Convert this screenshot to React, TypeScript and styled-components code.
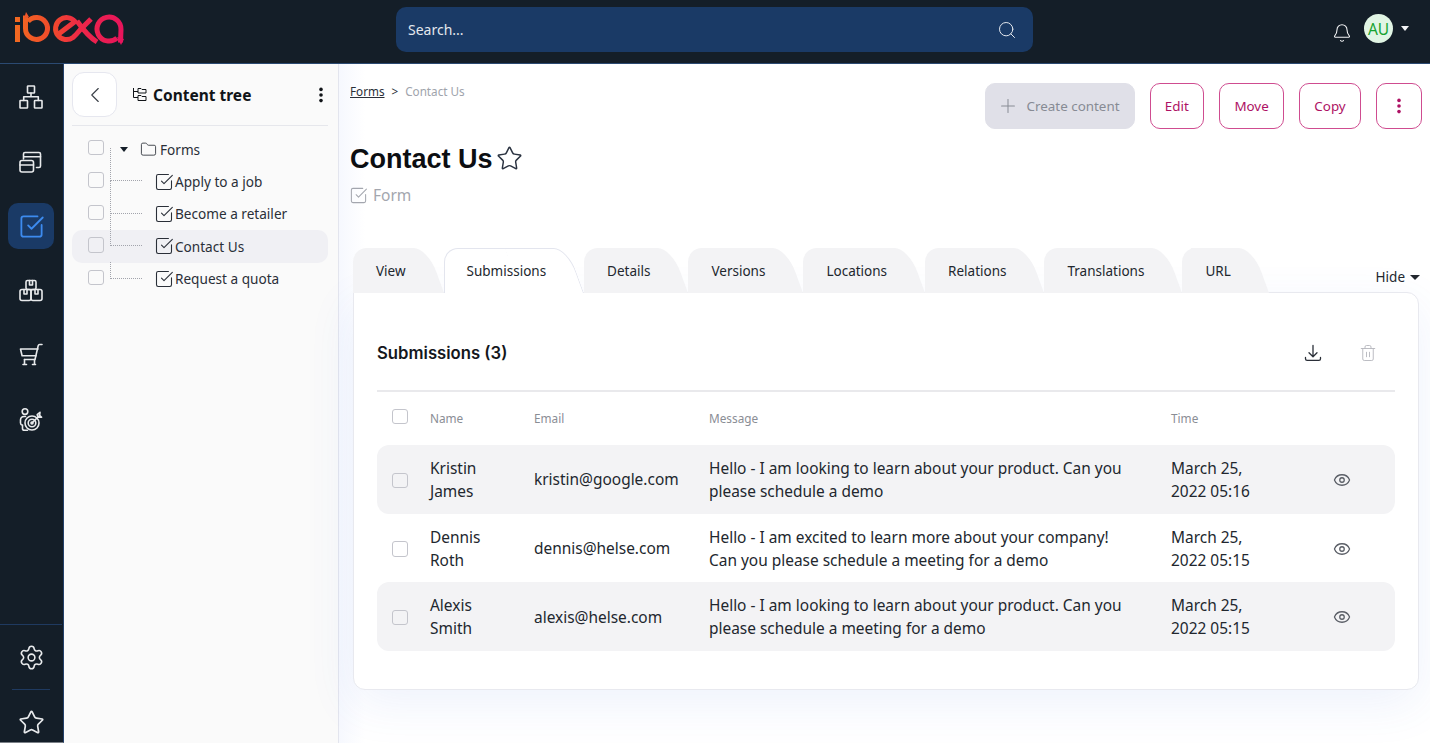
import React from "react";
import styled, { createGlobalStyle } from "styled-components";
import {
  Bell,
  ChevronLeft,
  Eye,
  Folder,
  Plus,
  Search,
  Settings,
  SquareCheckBig,
  Star,
  Trash2,
} from "lucide-react";

const GlobalStyle = createGlobalStyle`
  html, body {
    margin: 0;
    padding: 0;
    background: #fff;
    overflow: hidden;
  }
  * {
    box-sizing: border-box;
  }
  body {
    font-family: "Noto Sans", "Open Sans", sans-serif;
    color: #22272e;
  }
`;

const Page = styled.div`
  width: 1430px;
  height: 743px;
  display: flex;
  flex-direction: column;
  overflow: hidden;
`;

const TopBar = styled.header`
  height: 64px;
  flex: none;
  display: flex;
  align-items: flex-start;
  background: #141e28;
  border-bottom: 1px solid #2b4a72;
`;

const LogoBox = styled.div`
  width: 396px;
  flex: none;
  height: 63px;
`;

const SearchBox = styled.div`
  width: 637px;
  height: 45px;
  margin-top: 7px;
  padding: 0 16px 0 12px;
  display: flex;
  align-items: center;
  justify-content: space-between;
  background: #1a3a66;
  border-radius: 10px;
  color: #e4e8ee;
  font-size: 14px;
`;

const UserArea = styled.div`
  flex: 1;
  height: 63px;
  display: flex;
  align-items: center;
  justify-content: flex-end;
  padding: 0 21px 6px 0;
  color: #f2f3f5;
`;

const BellWrap = styled.span`
  display: flex;
  margin: 9px 12px 0 0;
`;

const Avatar = styled.div`
  width: 29px;
  height: 29px;
  border-radius: 50%;
  margin-right: 8px;
  background: #e1f5e4;
  color: #16a32f;
  font-size: 15.5px;
  display: flex;
  align-items: center;
  justify-content: center;
`;

const Caret = styled.span<{ $color?: string }>`
  display: inline-block;
  width: 0;
  height: 0;
  border-left: 4.5px solid transparent;
  border-right: 4.5px solid transparent;
  border-top: 5px solid ${(p) => p.$color || "#141e28"};
`;

const Body = styled.div`
  flex: 1;
  min-height: 0;
  display: flex;
`;

const SideNav = styled.nav`
  width: 64px;
  flex: none;
  display: flex;
  flex-direction: column;
  background: #141e28;
  border-right: 1px solid #23406a;
  border-bottom: 1px solid #7b8087;
  padding: 0 1px 0 0;
`;

const NavList = styled.div`
  flex: 1;
  padding-top: 10px;
  display: flex;
  flex-direction: column;
  align-items: center;
  gap: 18.6px;
`;

const NavItem = styled.div<{ $active?: boolean }>`
  width: 46px;
  height: 46px;
  flex: none;
  border-radius: 10px;
  display: flex;
  align-items: center;
  justify-content: center;
  color: ${(p) => (p.$active ? "#3d8bef" : "#e8eaec")};
  background: ${(p) => (p.$active ? "#1a3a66" : "transparent")};
`;

const NavBottom = styled.div`
  border-top: 1px solid #1f3a60;
  height: 118px;
  flex: none;
  display: flex;
  flex-direction: column;
  align-items: center;
  padding-top: 9.5px;
`;

const NavRule = styled.div`
  width: 38px;
  height: 1px;
  flex: none;
  background: #1f3a60;
  margin: 8.5px 0 9px;
`;

const TreePanel = styled.aside`
  width: 275px;
  flex: none;
  padding: 8px 10px 0 8px;
  background: #fafafa;
  border-right: 1px solid #e3e5ee;
`;

const TreeHead = styled.div`
  height: 54px;
  display: flex;
  align-items: flex-start;
  border-bottom: 1px solid #e6e7ec;
`;

const BackButton = styled.div`
  width: 45px;
  height: 45px;
  background: #fff;
  border: 1px solid #e6e7ef;
  border-radius: 12px;
  display: flex;
  align-items: center;
  justify-content: center;
  color: #3a3f47;
`;

const TreeTitle = styled.div`
  flex: 1;
  height: 45px;
  display: flex;
  align-items: center;
  gap: 6px;
  margin-left: 15px;
  font-size: 15.5px;
  font-weight: 700;
  color: #111418;
`;

const Kebab = styled.svg`
  display: block;
`;

const TreeKebab = styled.div`
  height: 45px;
  width: 9px;
  display: flex;
  align-items: center;
`;

const TreeList = styled.div`
  padding-top: 7px;
`;

const TreeRow = styled.div<{ $selected?: boolean }>`
  position: relative;
  height: 32.4px;
  padding-left: 16px;
  display: flex;
  align-items: center;
  border-radius: 10px;
  background: ${(p) => (p.$selected ? "#f0f0f4" : "transparent")};
  font-size: 13.6px;
  color: #2a2f38;
`;

const Connector = styled.span<{ $last?: boolean }>`
  position: absolute;
  left: 38px;
  top: ${(p) => (p.$last ? "-1px" : "-17px")};
  width: 32px;
  height: ${(p) => (p.$last ? "17px" : "33px")};
  border-left: 1px dotted #a2a4ac;

  &::after {
    content: "";
    position: absolute;
    left: 0;
    right: 0;
    bottom: 0;
    border-bottom: 1px dotted #a2a4ac;
  }
`;

const Check = styled.span<{ $lift?: number }>`
  display: block;
  flex: none;
  width: 15.5px;
  height: 15.5px;
  margin-top: ${(p) => -(p.$lift ?? 3)}px;
  border: 1.5px solid #c4c5cc;
  border-radius: 3px;
`;

const TreeCaret = styled(Caret)`
  margin: 0 12px 0 16.5px;
`;

const NodeIcon = styled.span<{ $leaf?: boolean }>`
  display: flex;
  margin: ${(p) => (p.$leaf ? "0 1px 0 -2px" : "0 3px 0 0")};
  color: #2a2f38;
`;

const ChildIndent = styled.span`
  width: 52.5px;
  flex: none;
`;

const Main = styled.main`
  flex: 1;
  min-width: 0;
  padding: 19px 8px 0 11px;
  background: linear-gradient(90deg, #f6f8fe 0, #fff 26px);
`;

const TopRow = styled.div`
  height: 46px;
  display: flex;
  justify-content: space-between;
`;

const Crumbs = styled.div`
  display: flex;
  gap: 7px;
  font-size: 11.7px;
  line-height: 17px;
  color: #a0a4ac;
`;

const CrumbLink = styled.span`
  color: #2a2f38;
  text-decoration: underline;
`;

const CrumbSep = styled.span`
  color: #2a2f38;
`;

const Actions = styled.div`
  display: flex;
  gap: 15px;
`;

const ActionButton = styled.div<{ $disabled?: boolean; $square?: boolean }>`
  height: 46px;
  display: flex;
  align-items: center;
  justify-content: center;
  gap: 8px;
  padding: ${(p) => (p.$square ? "0" : p.$disabled ? "0 14px 0 11px" : "0 14.3px")};
  width: ${(p) => (p.$square ? "46px" : "auto")};
  border-radius: 10px;
  font-size: 13.4px;
  background: ${(p) => (p.$disabled ? "#e0e0e8" : "#fff")};
  color: ${(p) => (p.$disabled ? "#878b94" : "#ae1164")};
  border: 1px solid ${(p) => (p.$disabled ? "#e0e0e8" : "#cf4c90")};
`;

const TitleRow = styled.div`
  display: flex;
  align-items: center;
  gap: 3px;
  margin-top: 13px;
  height: 34px;
`;

const Title = styled.h1`
  margin: 0;
  font-family: "Liberation Sans", Arial, sans-serif;
  font-size: 27px;
  font-weight: 700;
  color: #0c0e12;
`;

const TitleStar = styled.span`
  display: flex;
  margin-top: -2px;
  color: #2a3240;
`;

const TypeRow = styled.div`
  display: flex;
  align-items: center;
  gap: 5px;
  height: 22px;
  margin: 8px 0 0 -1px;
  font-size: 15.5px;
  color: #a3a6ae;
`;

const TabBar = styled.div`
  position: relative;
  z-index: 1;
  height: 45px;
  margin: 42px 2px -1px 3px;
  display: flex;
  justify-content: space-between;
`;

const Tabs = styled.div`
  display: flex;
`;

const Tab = styled.div<{ $active?: boolean }>`
  position: relative;
  height: 45px;
  padding: 0 38px 0 23px;
  display: flex;
  align-items: center;
  font-size: 13.5px;
  color: #22272e;
  z-index: ${(p) => (p.$active ? 2 : 1)};

  &::before {
    content: "";
    position: absolute;
    left: 0;
    top: 0;
    bottom: 0;
    right: 40px;
    background: ${(p) => (p.$active ? "#fff" : "#f3f3f5")};
    border-top-left-radius: 14px;
    border: ${(p) => (p.$active ? "1px solid #e3e5ee" : "none")};
    border-right: none;
    border-bottom: none;
  }

  &::after {
    content: "";
    position: absolute;
    right: 0;
    top: 0;
    bottom: 0;
    width: 62px;
    background: ${(p) => (p.$active ? "#fff" : "#f3f3f5")};
    border-top-right-radius: 14px 24px;
    border: ${(p) => (p.$active ? "1px solid #e3e5ee" : "none")};
    border-left: none;
    border-bottom: none;
    transform: skewX(20deg);
    transform-origin: bottom right;
  }
`;

const TabLabel = styled.span`
  position: relative;
  z-index: 1;
  margin-top: 1px;
`;

const HideToggle = styled.div`
  display: flex;
  align-items: center;
  gap: 5px;
  height: 18px;
  margin-top: 20px;
  font-size: 13.5px;
  color: #22272e;
`;

const HideCaret = styled(Caret)`
  border-left-width: 5px;
  border-right-width: 5px;
  border-top-width: 5.5px;
`;

const Card = styled.section`
  position: relative;
  height: 398px;
  margin: 0 3px 0 3px;
  padding: 0 23px;
  background: #fff;
  border: 1px solid #e8e9ef;
  border-radius: 0 12px 12px 12px;
  box-shadow: 0 14px 48px rgba(70, 110, 220, 0.09);
`;

const CardHead = styled.div`
  height: 99px;
  padding-top: 23px;
  display: flex;
  align-items: center;
  justify-content: space-between;
  border-bottom: 2px solid #e9e9ec;
`;

const CardTitle = styled.h2`
  margin: 0;
  font-family: Inter, sans-serif;
  font-size: 16.7px;
  font-weight: 600;
  color: #14171c;
`;

const CardTools = styled.div`
  display: flex;
  align-items: center;
  gap: 37px;
  padding-right: 18px;
  color: #2a2f38;
`;

const MutedIcon = styled.span`
  display: flex;
  color: #b4b6bc;
`;

const grid = `
  display: grid;
  grid-template-columns: 53px 104px 175px 462px 118px 1fr;
  align-items: center;
`;

const HeadRow = styled.div`
  ${grid}
  height: 53px;
  padding-bottom: 1px;
  font-size: 11.8px;
  color: #8a8d95;
`;

const CheckCell = styled.div`
  padding-left: 15px;
`;

const DataRow = styled.div<{ $shaded?: boolean }>`
  ${grid}
  height: 68.7px;
  padding-top: 1px;
  font-size: 15.45px;
  line-height: 23px;
  color: #22272e;
  border-radius: 12px;
  background: ${(p) => (p.$shaded ? "#f3f3f5" : "transparent")};
`;

const EyeCell = styled.div`
  display: flex;
  justify-content: center;
  color: #5a5e66;
`;

const Dots = ({ color, size = 4 }: { color: string; size?: number }) => (
  <Kebab width={size} height={size * 4} viewBox="0 0 4 16" fill={color}>
    <circle cx="2" cy="2.4" r="1.8" />
    <circle cx="2" cy="8" r="1.8" />
    <circle cx="2" cy="13.6" r="1.8" />
  </Kebab>
);

const Logo = () => (
  <svg width="140" height="60" viewBox="0 0 140 60" fill="none" style={{ display: "block" }}>
    <defs>
      <linearGradient id="logoGrad" x1="15" y1="0" x2="124" y2="0" gradientUnits="userSpaceOnUse">
        <stop offset="0" stopColor="#f26a21" />
        <stop offset="0.35" stopColor="#f0492c" />
        <stop offset="0.6" stopColor="#ee2748" />
        <stop offset="1" stopColor="#e8145c" />
      </linearGradient>
    </defs>
    <g stroke="url(#logoGrad)" strokeWidth="5">
      <path d="M17.5 17v5M17.5 25v17" />
      <path d="M28 21.5a11 11 0 1 1-2.5 7V15.5" />
      <path d="M56 36L75 21.5a11 11 0 1 0-2 16c3-2.5 5-5 7-7.5L91 19" />
      <path d="M77 21c3.5 5 12 16 20 21" />
      <path d="M120.5 42.5l.5-13a12 12 0 1 0-4 8.5" />
    </g>
    <path d="M26 12l3 5-5 2z" fill="#f0562a" />
    <path d="M117 37l7 2-3 6z" fill="#e8145c" />
  </svg>
);

const iconProps = {
  width: 24,
  height: 24,
  viewBox: "0 0 24 24",
  fill: "none",
  stroke: "currentColor",
  strokeWidth: 1.6,
  strokeLinejoin: "round" as const,
  strokeLinecap: "round" as const,
};

const SiteIcon = () => (
  <svg {...iconProps}>
    <rect x="8.5" y="1" width="7" height="7" rx="0.6" />
    <rect x="1" y="15.5" width="7.5" height="7.5" rx="0.6" />
    <rect x="15.5" y="15.5" width="7.5" height="7.5" rx="0.6" />
    <path d="M12 8v3.7M4.7 15.5v-3.8h14.6v3.8" />
  </svg>
);

const ContentIcon = () => (
  <svg {...iconProps}>
    <path d="M4.5 9V4A1.5 1.5 0 0 1 6 2.5h14A1.5 1.5 0 0 1 21.5 4v12a1.5 1.5 0 0 1-1.5 1.5h-2.5" />
    <path d="M5 6.8h16.5" />
    <rect x="1" y="10.5" width="13.5" height="11.5" rx="2" />
    <path d="M1 15h13.5" />
  </svg>
);

const BoxesIcon = () => (
  <svg {...iconProps}>
    <rect x="7" y="1.5" width="10" height="9" rx="1.4" />
    <rect x="1" y="10.5" width="11" height="11" rx="2" />
    <rect x="12" y="10.5" width="11" height="11" rx="2" />
    <path d="M10.5 1.5V6h3V1.5M5 10.5V15h3v-4.5M16 10.5V15h3v-4.5" />
  </svg>
);

const CartIcon = () => (
  <svg {...iconProps}>
    <path d="M23 1.5h-2.4c-.7 0-1.2.4-1.4 1.1L16 16.5H5.5" />
    <path d="M19 6H1.5l1.6 6.8h14" />
    <path d="M5.5 16.5v4.5M7.5 21.5H4M15.5 16.5v4.5M16.5 21.5h-3" />
  </svg>
);

const TargetIcon = () => (
  <svg {...iconProps}>
    <circle cx="6" cy="3.6" r="2.8" />
    <path d="M6.5 8.5H5A3.6 3.6 0 0 0 1.5 12v3c0 1.2.8 2 2 2.2M3.5 17v3.5c0 1 .8 1.8 2 1.8h3" />
    <circle cx="13" cy="15" r="7" />
    <circle cx="13" cy="15" r="3.8" />
    <circle cx="13" cy="15" r="1" />
    <path d="M13 15l7-7M19 9l3.6.3-2-2 .4-3-2.8 2.4z" />
  </svg>
);

const TreeIcon = () => (
  <svg width="15" height="15" viewBox="0 0 15 15" fill="none" stroke="currentColor" strokeWidth="1" strokeLinejoin="round">
    <path d="M1.5 1v9.5H6M1.5 4.5H6" />
    <path d="M6 1.5h3l1 1h4v3.5H6zM6 8.5h3l1 1h4V13.5H6z" />
  </svg>
);

const DownloadIcon = () => (
  <svg width="18" height="18" viewBox="0 0 18 18" fill="none" stroke="currentColor" strokeWidth="1.3" strokeLinecap="round" strokeLinejoin="round">
    <path d="M9 1.5v11M5 8.8l4 4 4-4" />
    <path d="M1.5 13.5v1.2c0 .9.7 1.6 1.6 1.6h11.8c.9 0 1.6-.7 1.6-1.6v-1.2" />
  </svg>
);

const ROWS = [
  {
    first: "Kristin",
    last: "James",
    email: "kristin@google.com",
    l1: "Hello - I am looking to learn about your product. Can you",
    l2: "please schedule a demo",
    time: "05:16",
    shaded: true,
  },
  {
    first: "Dennis",
    last: "Roth",
    email: "dennis@helse.com",
    l1: "Hello - I am excited to learn more about your company!",
    l2: "Can you please schedule a meeting for a demo",
    time: "05:15",
    shaded: false,
  },
  {
    first: "Alexis",
    last: "Smith",
    email: "alexis@helse.com",
    l1: "Hello - I am looking to learn about your product. Can you",
    l2: "please schedule a meeting for a demo",
    time: "05:15",
    shaded: true,
  },
];

const TABS = ["View", "Submissions", "Details", "Versions", "Locations", "Relations", "Translations", "URL"];

const TREE = ["Apply to a job", "Become a retailer", "Contact Us", "Request a quota"];

const App = () => {
  return (
    <Page>
      <GlobalStyle />
      <TopBar>
        <LogoBox>
          <Logo />
        </LogoBox>
        <SearchBox>
          <span>Search...</span>
          <Search size={20} strokeWidth={1.2} />
        </SearchBox>
        <UserArea>
          <BellWrap>
            <Bell size={20} strokeWidth={1.3} />
          </BellWrap>
          <Avatar>AU</Avatar>
          <Caret $color="#f2f3f5" />
        </UserArea>
      </TopBar>
      <Body>
        <SideNav>
          <NavList>
            <NavItem>
              <SiteIcon />
            </NavItem>
            <NavItem>
              <ContentIcon />
            </NavItem>
            <NavItem $active>
              <SquareCheckBig size={27} strokeWidth={1.6} />
            </NavItem>
            <NavItem>
              <BoxesIcon />
            </NavItem>
            <NavItem>
              <CartIcon />
            </NavItem>
            <NavItem>
              <TargetIcon />
            </NavItem>
          </NavList>
          <NavBottom>
            <NavItem>
              <Settings size={27} strokeWidth={1.4} />
            </NavItem>
            <NavRule />
            <NavItem>
              <Star size={27} strokeWidth={1.5} />
            </NavItem>
          </NavBottom>
        </SideNav>
        <TreePanel>
          <TreeHead>
            <BackButton>
              <ChevronLeft size={26} strokeWidth={1} />
            </BackButton>
            <TreeTitle>
              <TreeIcon />
              Content tree
            </TreeTitle>
            <TreeKebab>
              <Dots color="#111418" />
            </TreeKebab>
          </TreeHead>
          <TreeList>
            <TreeRow>
              <Check />
              <TreeCaret />
              <NodeIcon>
                <Folder size={17} strokeWidth={1.2} />
              </NodeIcon>
              Forms
            </TreeRow>
            {TREE.map((name, i) => (
              <TreeRow key={name} $selected={name === "Contact Us"}>
                <Connector $last={i === TREE.length - 1} />
                <Check />
                <ChildIndent />
                <NodeIcon $leaf>
                  <SquareCheckBig size={20} strokeWidth={1.3} />
                </NodeIcon>
                {name}
              </TreeRow>
            ))}
          </TreeList>
        </TreePanel>
        <Main>
          <TopRow>
            <Crumbs>
              <CrumbLink>Forms</CrumbLink>
              <CrumbSep>&gt;</CrumbSep>
              <span>Contact Us</span>
            </Crumbs>
            <Actions>
              <ActionButton $disabled>
                <Plus size={22} strokeWidth={1.1} />
                Create content
              </ActionButton>
              <ActionButton>Edit</ActionButton>
              <ActionButton>Move</ActionButton>
              <ActionButton>Copy</ActionButton>
              <ActionButton $square>
                <Dots color="#ae1164" />
              </ActionButton>
            </Actions>
          </TopRow>
          <TitleRow>
            <Title>Contact Us</Title>
            <TitleStar>
              <Star size={27} strokeWidth={1.3} />
            </TitleStar>
          </TitleRow>
          <TypeRow>
            <SquareCheckBig size={19} strokeWidth={1.3} />
            Form
          </TypeRow>
          <TabBar>
            <Tabs>
              {TABS.map((t) => (
                <Tab key={t} $active={t === "Submissions"}>
                  <TabLabel>{t}</TabLabel>
                </Tab>
              ))}
            </Tabs>
            <HideToggle>
              Hide
              <HideCaret $color="#22272e" />
            </HideToggle>
          </TabBar>
          <Card>
            <CardHead>
              <CardTitle>Submissions (3)</CardTitle>
              <CardTools>
                <DownloadIcon />
                <MutedIcon>
                  <Trash2 size={18} strokeWidth={1.2} />
                </MutedIcon>
              </CardTools>
            </CardHead>
            <HeadRow>
              <CheckCell>
                <Check />
              </CheckCell>
              <span>Name</span>
              <span>Email</span>
              <span>Message</span>
              <span>Time</span>
            </HeadRow>
            {ROWS.map((r) => (
              <DataRow key={r.email} $shaded={r.shaded}>
                <CheckCell>
                  <Check $lift={-1} />
                </CheckCell>
                <div>
                  {r.first}
                  <br />
                  {r.last}
                </div>
                <div>{r.email}</div>
                <div>
                  {r.l1}
                  <br />
                  {r.l2}
                </div>
                <div>
                  March 25,
                  <br />
                  2022 {r.time}
                </div>
                <EyeCell>
                  <Eye size={18} strokeWidth={1.7} />
                </EyeCell>
              </DataRow>
            ))}
          </Card>
        </Main>
      </Body>
    </Page>
  );
};

export default App;
